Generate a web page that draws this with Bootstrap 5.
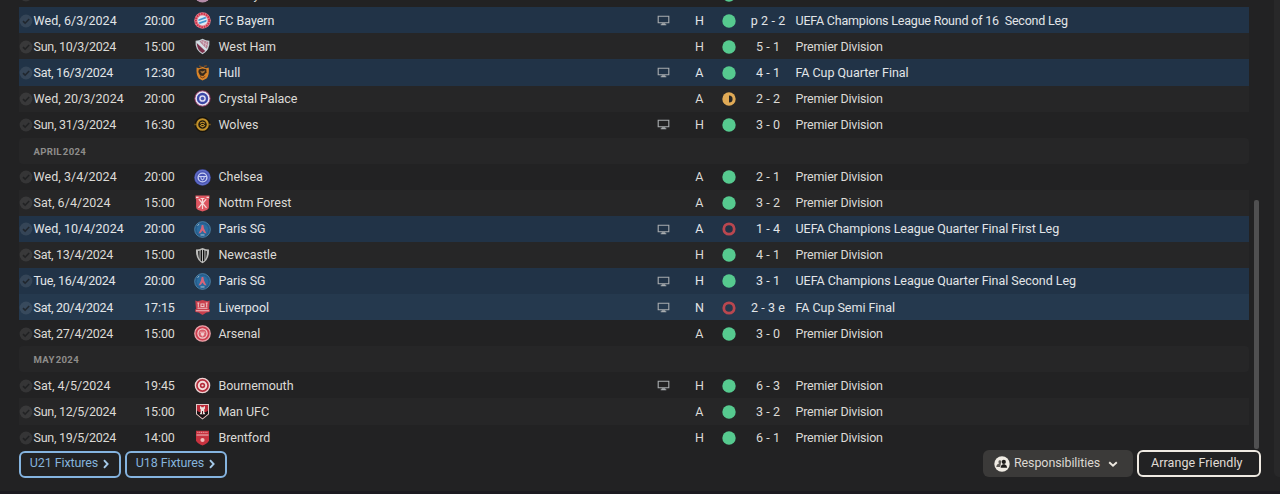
<!DOCTYPE html>
<html lang="en">
<head>
    <meta charset="UTF-8">
    <title>Fixtures</title>
    <link href="https://cdn.jsdelivr.net/npm/bootstrap@5.3.3/dist/css/bootstrap.min.css" rel="stylesheet">
    <style>
        body { width: 1280px; height: 494px; overflow: hidden; background: #222223; color: #dcdad6; font: 12.5px/26px Roboto, "Liberation Sans", sans-serif; letter-spacing: .1px; }
        .page { height: 491px; padding-left: 19px; }
        .list-area { height: 450.6px; }
        .fixtures { width: 1230px; }
        .fixture { height: 26.08px; padding-top: .7px; flex: none; white-space: pre; }
        .fixture.alt { background: #262627; }
        .fixture.cup { background: #213347; color: #e2e5e8; }
        .fixture.cup-alt { background: #25394e; color: #e2e5e8; }
        .month { height: 26.08px; flex: none; padding: 1px 0 0 14.5px; background: #262627; border-radius: 4px; color: #8e8d8b; font-size: 9.6px; font-weight: 700; letter-spacing: .3px; word-spacing: -1.6px; line-height: 26px; }
        .fixture svg { display: block; }
        .c-check { width: 14px; }
        .c-date { width: 91px; padding-left: .5px; letter-spacing: .05px; }
        .c-date.tight { letter-spacing: -.27px; }
        .c-time { width: 70px; padding-left: 1px; letter-spacing: -.1px; }
        .c-crest { width: 17px; }
        .c-team { width: 438px; padding-left: 7.5px; letter-spacing: -.05px; }
        .c-tv { width: 28px; }
        .c-venue { width: 45px; }
        .c-result { width: 14px; }
        .c-score { width: 64px; margin-right: -4.5px; }
        .c-comp { letter-spacing: -.04px; }
        .c-comp.league { letter-spacing: -.2px; }
        .c-comp.round { letter-spacing: -.2px; }
        .scroll-track { width: 5px; margin-left: 5px; padding-top: 200px; }
        .scroll-thumb { height: 249px; background: #505051; border-radius: 2px; }
        .edge { width: 6px; height: 477px; background: #282829; border-radius: 0 0 0 5px; }
        .actions { width: 1241.5px; }
        .btn-fm { height: 27px; padding: 0 0 2px; border-radius: 6px; font: inherit; line-height: 22px; display: flex; align-items: center; justify-content: center; }
        .btn-fm svg { position: relative; top: 1px; }
        .btn-squad { width: 102px; border: 2px solid #85b4e0; color: #85b4dc; letter-spacing: -.1px; }
        .btn-resp { width: 150px; padding-right: 4px; background: #3b3a39; color: #dcd8d2; letter-spacing: -.1px; margin-top: -.5px; }
        .btn-friendly { width: 123.5px; padding-right: 4px; border: 2px solid #efeae2; color: #e0dcd5; letter-spacing: .08px; margin-top: -.5px; }
        .bottom-line { height: 3px; background: #1c1a20; }
    </style>
</head>
<body>
<svg width="0" height="0" class="position-absolute">
    <symbol id="check" viewBox="0 0 14 14"><circle cx="7" cy="7" r="6.4" fill="#fff" fill-opacity=".09"/><path d="M4 7.2l2.1 2L10.2 5" fill="none" stroke="#151719" stroke-opacity=".65" stroke-width="1.6"/></symbol>
    <symbol id="tv" viewBox="0 0 13 11"><path d="M1.2 1.2h10.600v6.600H1.200z" fill="none" stroke="#a9adb0" stroke-width="1.1"/><path d="M4.7 8.300h3.600v1h1v1H3.700v-1h1z" fill="#a9adb0"/></symbol>
    <symbol id="win" viewBox="0 0 14 14"><circle cx="7" cy="7" r="6.7" fill="#56ca8f"/></symbol>
    <symbol id="draw" viewBox="0 0 14 14"><circle cx="7" cy="7" r="6.7" fill="#e0aa56"/><path d="M7 3.400a3.600 3.600 0 0 1 0 7.200z" fill="#262627"/></symbol>
    <symbol id="loss" viewBox="0 0 14 14"><circle cx="7" cy="7" r="5.200" fill="none" stroke="#b9474f" stroke-width="2.800"/></symbol>

    <symbol id="burnley" viewBox="0 0 17 17"><circle cx="8.5" cy="8.5" r="8" fill="#b48ba8"/><circle cx="8.5" cy="8.5" r="5.5" fill="#7e3e62"/></symbol>
    <symbol id="bayern" viewBox="0 0 17 17"><circle cx="8.5" cy="8.5" r="8.300" fill="#e3828f"/><circle cx="8.5" cy="8.5" r="6.700" fill="none" stroke="#cf3048" stroke-width="2" stroke-dasharray="1.600 .9"/><circle cx="8.5" cy="8.5" r="5" fill="#dce9f4"/><path d="M4.300 7.500l7-2.800 1.200 1.600-8 2.600zM4.500 10.400l8.200-2.600-.5 2-6.500 2.100z" fill="#4295cf"/></symbol>
    <symbol id="westham" viewBox="0 0 17 17"><path d="M1.600 2.800Q5 2.800 8.500.8 12 2.800 15.400 2.800 16.400 12 8.500 16.200.6 12 1.600 2.800z" fill="#c4ccd2"/><path d="M5.600 3.200L8.500 2 14.200 4q.2 4.700-2.100 7.500z" fill="#b77f91"/><path d="M2.800 5l8.400 8-2.700 2Q3 12.400 2.800 5z" fill="#7b304a"/><path d="M3.400 3.800l9.300 8.500" stroke="#d7e2e8" stroke-width="2"/><path d="M7 3l7 4.500M10 2.500l-1 5M12.500 3.400l-1.300 6" stroke="#ddd4dc" stroke-width=".6"/></symbol>
    <symbol id="hull" viewBox="0 0 17 17"><path d="M2.600 3.500L5 4.200 8.500 2.800l3.500 1.400 2.700-.7q.9 8-2.200 10.900l-4 2-3.700-2Q1.900 11 2.600 3.500z" fill="#d98428"/><path d="M4.800 5.500l3.500-.9 4 .7.200 3-3.200 3.800-3.200-.7L4.300 8z" fill="#36291d"/><path d="M6.100 6.700l2.200.8 3-1.200-1 2.300-2.300 1z" fill="#a9783c"/><path d="M5 1.800l2.700 1M9.800 2.500l3-.9" stroke="#7a4e27" stroke-width="1.400"/><path d="M6 12.500l2.500 1.400 2.800-1.500" stroke="#793f17" fill="none"/></symbol>
    <symbol id="palace" viewBox="0 0 17 17"><circle cx="8.5" cy="8.5" r="7.700" fill="#e7e5f3" stroke="#8f2959" stroke-width=".9"/><circle cx="8.5" cy="8.5" r="4.500" fill="#dcd9f1" stroke="#3b46a6" stroke-width="2.300"/><circle cx="8.5" cy="8.5" r="1.800" fill="#4650ac"/></symbol>
    <symbol id="wolves" viewBox="0 0 17 17"><circle cx="8.5" cy="8.5" r="7.800" fill="#18140c"/><circle cx="8.5" cy="8.5" r="5.300" fill="#221b0e" stroke="#c3922b" stroke-width="2.100"/><path d="M5.900 7.300l2.600-1.200 2.600 1.200M6 9.200l2.500 1.700L11 9.200M7 8.500h3" fill="none" stroke="#c3922b" stroke-width="1.100"/><path d="M.4 8.500h1.400M15.200 8.500h1.400" stroke="#8a681f" stroke-width="1.500"/></symbol>
    <symbol id="chelsea" viewBox="0 0 17 17"><circle cx="8.5" cy="8.5" r="8.300" fill="#4854b5"/><circle cx="8.5" cy="8.5" r="7" fill="none" stroke="#7681cf" stroke-width=".8"/><circle cx="8.5" cy="8.5" r="4.400" fill="none" stroke="#c8cff2" stroke-width="1.400"/><path d="M4.600 7.500h7.800M6.800 8q.2 2.400 1.700 2.900Q10 10.400 10.200 8" fill="none" stroke="#c8cff2" stroke-width="1.100"/></symbol>
    <symbol id="forest" viewBox="0 0 17 17"><path d="M1.500.6h14v3l-.6 1v7.500q0 2-2 2.900l-4.400 1.600-4.400-1.600q-2-.9-2-2.900V4.600l-.6-1z" fill="#de5661"/><path d="M2 2.300h2.500M12.500 2.300H15M8.500 3.500V14M4.800 4.200l3.700 4.300 3.700-4.300M4.500 12.800l4-4.800 4 4.800M6.600 3.500h3.800" fill="none" stroke="#f6dad9" stroke-width="1.200"/></symbol>
    <symbol id="psg" viewBox="0 0 17 17"><circle cx="8.5" cy="8.5" r="7.900" fill="#265d8d" stroke="#5a91b5" stroke-width=".7"/><circle cx="8.5" cy="8.5" r="5.700" fill="#2b6c9f"/><path d="M7.700 4h1.600l.7 3.500 2.400 4.900-2.300-.7-1.600-2.200-1.600 2.200-2.300.7L7 7.500z" fill="#d86579"/><path d="M6.500 14h4M3.500 4.500l1.800-1.400" stroke="#b7d1df" stroke-width=".9"/></symbol>
    <symbol id="newcastle" viewBox="0 0 17 17"><path d="M2 2.600Q5 2.600 8.500 1q3.500 1.600 6.500 1.600.5 10-6.500 13.600Q1.500 12.600 2 2.600z" fill="#bdbdbb"/><path d="M4.200 4l1.300-.2v8.600Q4.200 10 4.200 4zM11.500 3.800l1.300.2q0 6-1.300 8.400zM6.600 3.400L8 2.800v11.800l-1.400-1.200zM9 2.800l1.400.6v10L9 14.600z" fill="#121212"/></symbol>
    <symbol id="liverpool" viewBox="0 0 17 17"><path d="M1.300 1.500l2.200.8L8.500 1l5 1.300 2.200-.8-.7 8.500 1 .7-.4 2.300-3.100.5-4 2.600-4-2.600-3.100-.5-.4-2.300 1-.7z" fill="#c83e4c"/><path d="M3.300 4h2M4.300 4v4.200M11.700 4h2M12.700 4v4.200M7 5h3v2.500H7zM3.500 9.300h10M2 11.800h13" fill="none" stroke="#efc0c2" stroke-width="1.100"/></symbol>
    <symbol id="arsenal" viewBox="0 0 17 17"><circle cx="8.5" cy="8.5" r="7.700" fill="#cc3d4e" stroke="#eba3aa" stroke-width="1.300"/><circle cx="8.5" cy="8.5" r="4.600" fill="#d75b68" stroke="#f1d3d4" stroke-width="1.200"/><path d="M5.800 7.200h5.400M7 8.600q0 1.800 1.500 2.500Q10 10.400 10 8.600z" fill="#f1d3d4" stroke="#f1d3d4" stroke-width=".8"/></symbol>
    <symbol id="bournemouth" viewBox="0 0 17 17"><circle cx="8.5" cy="8.5" r="7.100" fill="#b52f3d" stroke="#efd4d4" stroke-width="1.400"/><circle cx="8.5" cy="8.5" r="3.700" fill="#b52f3d" stroke="#f1dddb" stroke-width="2"/><circle cx="8.5" cy="8.5" r="1.100" fill="#f1dddb"/></symbol>
    <symbol id="manufc" viewBox="0 0 17 17"><path d="M2 .9h13v10.300L8.500 16.600 2 11.200z" fill="#dfc9c8"/><path d="M3 1.900h11v8.800l-5.500 4.600L3 10.700z" fill="#bd2a38"/><path d="M3 7.500l2 1.500h7l2-1.500v3.200l-5.500 4.600L3 10.700z" fill="#171214"/><path d="M6 3.300h1.200v1h2.600v-1H11v2.200l-.7.800v3l1 2H5.700l1-2v-3L6 5.500z" fill="#eee2df"/><path d="M8.500 8v3.500" stroke="#571b23"/></symbol>
    <symbol id="brentford" viewBox="0 0 17 17"><path d="M2 1.800h13v9.700q-1.200 3-6.500 5-5.300-2-6.500-5z" fill="#c8323f"/><path d="M3.300 3.400h10.400" stroke="#e58b91" stroke-width="1.400" stroke-dasharray="1.200 .6"/><path d="M2.500 6h12" stroke="#efbdbf" stroke-width="1"/><circle cx="8.5" cy="11" r="2.100" fill="#f0bdbb"/></symbol>
</svg>

<div class="page d-flex flex-column">
    <div class="list-area d-flex">
        <div id="fixtures" class="fixtures d-flex flex-column justify-content-end overflow-hidden"></div>
        <div class="scroll-track"><div class="scroll-thumb"></div></div>
        <div class="edge ms-auto"></div>
    </div>
    <div class="actions d-flex">
        <button class="btn btn-fm btn-squad" type="button">U21 Fixtures<svg class="ms-1" width="8" height="10" viewBox="0 0 8 10"><path d="M2 1.200L5.600 5 2 8.800" fill="none" stroke="#a5cae9" stroke-width="1.900"/></svg></button>
        <button class="btn btn-fm btn-squad ms-1" type="button">U18 Fixtures<svg class="ms-1" width="8" height="10" viewBox="0 0 8 10"><path d="M2 1.200L5.600 5 2 8.800" fill="none" stroke="#a5cae9" stroke-width="1.900"/></svg></button>
        <button class="btn btn-fm btn-resp ms-auto me-1" type="button"><svg class="me-1" width="16" height="16" viewBox="0 0 16 16"><circle cx="8" cy="8" r="7.700" fill="#f0ece4"/><path d="M2.300 11q.2-3 2.600-3.300-1.200-3.200.9-3.500l1.600.6L6.800 8l-.6 3z" fill="#5f5c58"/><g fill="#1e1c1b"><circle cx="9.800" cy="5.900" r="2.100"/><path d="M6.600 11.700q.1-2.800 2.300-3.500h1.800q2.300.6 2.500 3.500z"/></g></svg>Responsibilities<svg class="ms-2" width="10" height="8" viewBox="0 0 10 8"><path d="M1.200 2.200L5 5.700l3.800-3.500" fill="none" stroke="#eee9e1" stroke-width="1.900"/></svg></button>
        <button class="btn btn-fm btn-friendly" type="button">Arrange Friendly</button>
    </div>
</div>
<div class="bottom-line"></div>

<script src="https://cdn.jsdelivr.net/npm/bootstrap@5.3.3/dist/js/bootstrap.bundle.min.js"></script>
<script>
// style, date, time, crest, team, on tv, venue, result, score, competition
const rows = [
    // scrolled almost out of view
    ['', '', '', 'burnley', 'Burnley', 0, '', 'win', '', ''],
    ['cup', 'Wed, 6/3/2024', '20:00', 'bayern', 'FC Bayern', 1, 'H', 'win', 'p 2 - 2', 'UEFA Champions League Round of 16  Second Leg'],
    ['alt', 'Sun, 10/3/2024', '15:00', 'westham', 'West Ham', 0, 'H', 'win', '5 - 1', 'Premier Division'],
    ['cup', 'Sat, 16/3/2024', '12:30', 'hull', 'Hull', 1, 'A', 'win', '4 - 1', 'FA Cup Quarter Final'],
    ['alt', 'Wed, 20/3/2024', '20:00', 'palace', 'Crystal Palace', 0, 'A', 'draw', '2 - 2', 'Premier Division'],
    ['', 'Sun, 31/3/2024', '16:30', 'wolves', 'Wolves', 1, 'H', 'win', '3 - 0', 'Premier Division'],
    'APRIL 2024',
    ['', 'Wed, 3/4/2024', '20:00', 'chelsea', 'Chelsea', 0, 'A', 'win', '2 - 1', 'Premier Division'],
    ['alt', 'Sat, 6/4/2024', '15:00', 'forest', 'Nottm Forest', 0, 'A', 'win', '3 - 2', 'Premier Division'],
    ['cup', 'Wed, 10/4/2024', '20:00', 'psg', 'Paris SG', 1, 'A', 'loss', '1 - 4', 'UEFA Champions League Quarter Final First Leg'],
    ['alt', 'Sat, 13/4/2024', '15:00', 'newcastle', 'Newcastle', 0, 'H', 'win', '4 - 1', 'Premier Division'],
    ['cup', 'Tue, 16/4/2024', '20:00', 'psg', 'Paris SG', 1, 'H', 'win', '3 - 1', 'UEFA Champions League Quarter Final Second Leg'],
    ['cup-alt', 'Sat, 20/4/2024', '17:15', 'liverpool', 'Liverpool', 1, 'N', 'loss', '2 - 3 e', 'FA Cup Semi Final'],
    ['', 'Sat, 27/4/2024', '15:00', 'arsenal', 'Arsenal', 0, 'A', 'win', '3 - 0', 'Premier Division'],
    'MAY 2024',
    ['', 'Sat, 4/5/2024', '19:45', 'bournemouth', 'Bournemouth', 1, 'H', 'win', '6 - 3', 'Premier Division'],
    ['alt', 'Sun, 12/5/2024', '15:00', 'manufc', 'Man UFC', 0, 'A', 'win', '3 - 2', 'Premier Division'],
    ['', 'Sun, 19/5/2024', '14:00', 'brentford', 'Brentford', 0, 'H', 'win', '6 - 1', 'Premier Division']
];

function icon(id, w, h) {
    return `<svg class="mx-auto" width="${w}" height="${h}"><use href="#${id}"/></svg>`;
}

document.getElementById('fixtures').innerHTML = rows.map(r => {
    if (typeof r === 'string') return `<div class="month">${r}</div>`;
    const [style, date, time, crest, team, tv, venue, result, score, comp] = r;
    const tight = /^(S|T).., \d\d/.test(date) ? 'tight' : '';
    const kind = comp.startsWith('Premier') ? 'league' : comp.includes('Round') ? 'round' : '';
    return `<div class="fixture d-flex align-items-center ${style}">` +
        `<div class="c-check">${icon('check', 14, 14)}</div>` +
        `<div class="c-date ${tight}">${date}</div>` +
        `<div class="c-time text-center">${time}</div>` +
        `<div class="c-crest">${icon(crest, 17, 17)}</div>` +
        `<div class="c-team">${team}</div>` +
        `<div class="c-tv">${tv ? icon('tv', 13, 11) : ''}</div>` +
        `<div class="c-venue text-center">${venue}</div>` +
        `<div class="c-result">${icon(result, 14, 14)}</div>` +
        `<div class="c-score text-center">${score}</div>` +
        `<div class="c-comp ${kind}">${comp}</div></div>`;
}).join('');
</script>
</body>
</html>
